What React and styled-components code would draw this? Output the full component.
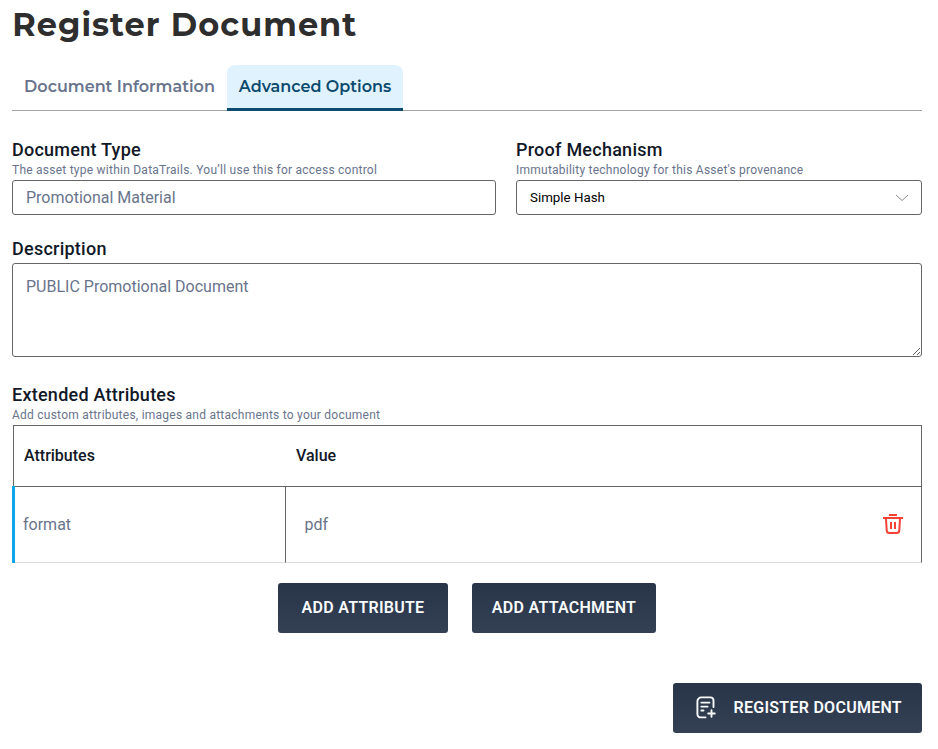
import React from "react";
import styled, { createGlobalStyle } from "styled-components";

const GlobalStyle = createGlobalStyle`
  *, *::before, *::after { box-sizing: border-box; }
  body {
    margin: 0;
    background: #fff;
    font-family: Roboto, "Liberation Sans", sans-serif;
    color: #111827;
    overflow: hidden;
  }
`;

const Page = styled.main`
  width: 938px;
  height: 749px;
  padding: 0 16px 0 12px;
`;

const Title = styled.h1`
  margin: 0;
  height: 65px;
  padding: 5px 0 0 0.2px;
  font: 700 32px/40px Montserrat, Inter, sans-serif;
  letter-spacing: 1.04px;
  white-space: nowrap;
  color: #2e2e2e;
`;

const Tabs = styled.div`
  display: flex;
  height: 46px;
  border-bottom: 1px solid #a3a3a3;
`;

const Tab = styled.button`
  width: ${(p) => p.$width}px;
  height: 46px;
  padding: 1px 0 0;
  border: 0;
  border-bottom: 3px solid ${(p) => (p.$active ? "#0c4a6e" : "transparent")};
  border-radius: 8px 8px 0 0;
  background: ${(p) => (p.$active ? "#e0f2fe" : "transparent")};
  color: ${(p) => (p.$active ? "#0c4a6e" : "#69748c")};
  font: 600 16px/24px Montserrat, Inter, sans-serif;
  white-space: nowrap;
`;

const FieldRow = styled.div`
  display: grid;
  grid-template-columns: 484px 406px;
  gap: 20px;
  margin-top: 25px;
`;

const Section = styled.section`
  margin-top: ${(p) => p.$gap}px;
`;

const Label = styled.h2`
  margin: 0;
  font-weight: 500;
  font-size: 18px;
  line-height: 28px;
  letter-spacing: 0.25px;
`;

const Hint = styled.p`
  margin: -2px 0 0;
  font-size: 12px;
  line-height: 16px;
  height: 18px;
  letter-spacing: 0.24px;
  color: #69748c;
`;

const Input = styled.input`
  display: block;
  width: 100%;
  height: 35px;
  padding: 0 13px;
  border: 1px solid #666;
  border-radius: 3px;
  background: #fff;
  font: 400 16px/24px Roboto, sans-serif;
  color: #69748c;
`;

const Select = styled.button`
  display: flex;
  align-items: center;
  justify-content: space-between;
  width: 100%;
  height: 35px;
  padding: 1px 12px 0 13px;
  border: 1px solid #666;
  border-radius: 3px;
  background: #fff;
  font: 400 13.333px/20px Roboto, sans-serif;
  color: #000;
`;

const TextArea = styled.textarea`
  display: block;
  width: 100%;
  height: 94px;
  padding: 11px 13px 9px;
  border: 1px solid #666;
  border-radius: 3px;
  font: 400 16px/24px Roboto, sans-serif;
  color: #69748c;
  resize: vertical;
`;

const Table = styled.div`
  display: flex;
  flex-direction: column;
`;

const HeadRow = styled.div`
  display: grid;
  grid-template-columns: 272px 1fr;
  align-items: center;
  height: 62px;
  margin-left: 1px;
  padding: 0 0 2px 10px;
  border: 1px solid #666;
  font-size: 16px;
  font-weight: 500;
`;

const BodyRow = styled.div`
  display: grid;
  grid-template-columns: 271px 1fr;
  height: 77px;
  margin-top: -1px;
  border-left: 3px solid #0ea5e9;
`;

const Cell = styled.div`
  display: flex;
  align-items: center;
  justify-content: space-between;
  padding: 0 18px 0 ${(p) => p.$inset}px;
  border-top: 1px solid #666;
  border-right: 1px solid #666;
  border-bottom: 1px solid #ddd;
  font-size: 16px;
  color: #69748c;
`;

const IconButton = styled.button`
  display: flex;
  padding: 0 0 1px;
  border: 0;
  background: none;
  color: #f44336;
`;

const Actions = styled.div`
  display: flex;
  justify-content: ${(p) => p.$align};
  gap: 24px;
  margin-top: ${(p) => p.$gap}px;
`;

const Button = styled.button`
  display: flex;
  align-items: center;
  justify-content: center;
  gap: 18px;
  width: ${(p) => p.$width}px;
  height: 50px;
  padding: 0 0 1px ${(p) => (p.$withIcon ? 2.5 : 0)}px;
  border: 0;
  border-radius: 3px;
  background: linear-gradient(#283548, #344155);
  color: #f8fafc;
  font: 600 16px/24px Roboto, sans-serif;
  letter-spacing: 0.27px;
  white-space: nowrap;
`;

const Chevron = () => (
  <svg width="14" height="8" viewBox="0 0 14 8" fill="none" stroke="#8c8c8c">
    <path d="M1 1l6 5.5L13 1" />
  </svg>
);

const Trash = () => (
  <svg width="20" height="20" viewBox="0 0 20 20" fill="none" stroke="currentColor" strokeWidth="2">
    <path d="M6 1h8M0 4h20M3 4.5l.7 11.9A2.7 2.7 0 0 0 6.4 19h7.2a2.7 2.7 0 0 0 2.7-2.6L17 4.5M8 8v7M12 8v7" />
  </svg>
);

const DocumentPlus = () => (
  <svg width="20" height="23" viewBox="0 0 20 23" fill="none" stroke="currentColor" strokeWidth="1.9" strokeLinecap="round">
    <path d="M17.5 11V4.5A3.2 3.2 0 0 0 14.3 1.4H5.2C3.2 1.4 1.4 3.2 1.4 5.2v13a3.2 3.2 0 0 0 3.2 3.2H9.5M5.3 6.6h8.2M5.3 10.6h6.3M5.3 14.5h2.2M15.5 14.2v6.6M12.2 17.5h6.6" />
  </svg>
);

export default function App() {
  return (
    <Page>
      <GlobalStyle />
      <Title>Register Document</Title>
      <Tabs>
        <Tab $width={215}>Document Information</Tab>
        <Tab $width={176} $active>Advanced Options</Tab>
      </Tabs>
      <FieldRow>
        <div>
          <Label>Document Type</Label>
          <Hint>The asset type within DataTrails. You’ll use this for access control</Hint>
          <Input defaultValue="Promotional Material" />
        </div>
        <div>
          <Label>Proof Mechanism</Label>
          <Hint>Immutability technology for this Asset's provenance</Hint>
          <Select>
            Simple Hash
            <Chevron />
          </Select>
        </div>
      </FieldRow>
      <Section $gap={20}>
        <Label>Description</Label>
        <TextArea defaultValue="PUBLIC Promotional Document" />
      </Section>
      <Section $gap={24}>
        <Label>Extended Attributes</Label>
        <Hint>Add custom attributes, images and attachments to your document</Hint>
        <Table>
          <HeadRow>
            <span>Attributes</span>
            <span>Value</span>
          </HeadRow>
          <BodyRow>
            <Cell $inset={8}>format</Cell>
            <Cell $inset={18.5}>
              pdf
              <IconButton aria-label="Delete attribute">
                <Trash />
              </IconButton>
            </Cell>
          </BodyRow>
        </Table>
      </Section>
      <Actions $align="center" $gap={20}>
        <Button $width={170}>ADD ATTRIBUTE</Button>
        <Button $width={184}>ADD ATTACHMENT</Button>
      </Actions>
      <Actions $align="flex-end" $gap={50}>
        <Button $width={249} $withIcon>
          <DocumentPlus />
          REGISTER DOCUMENT
        </Button>
      </Actions>
    </Page>
  );
}
